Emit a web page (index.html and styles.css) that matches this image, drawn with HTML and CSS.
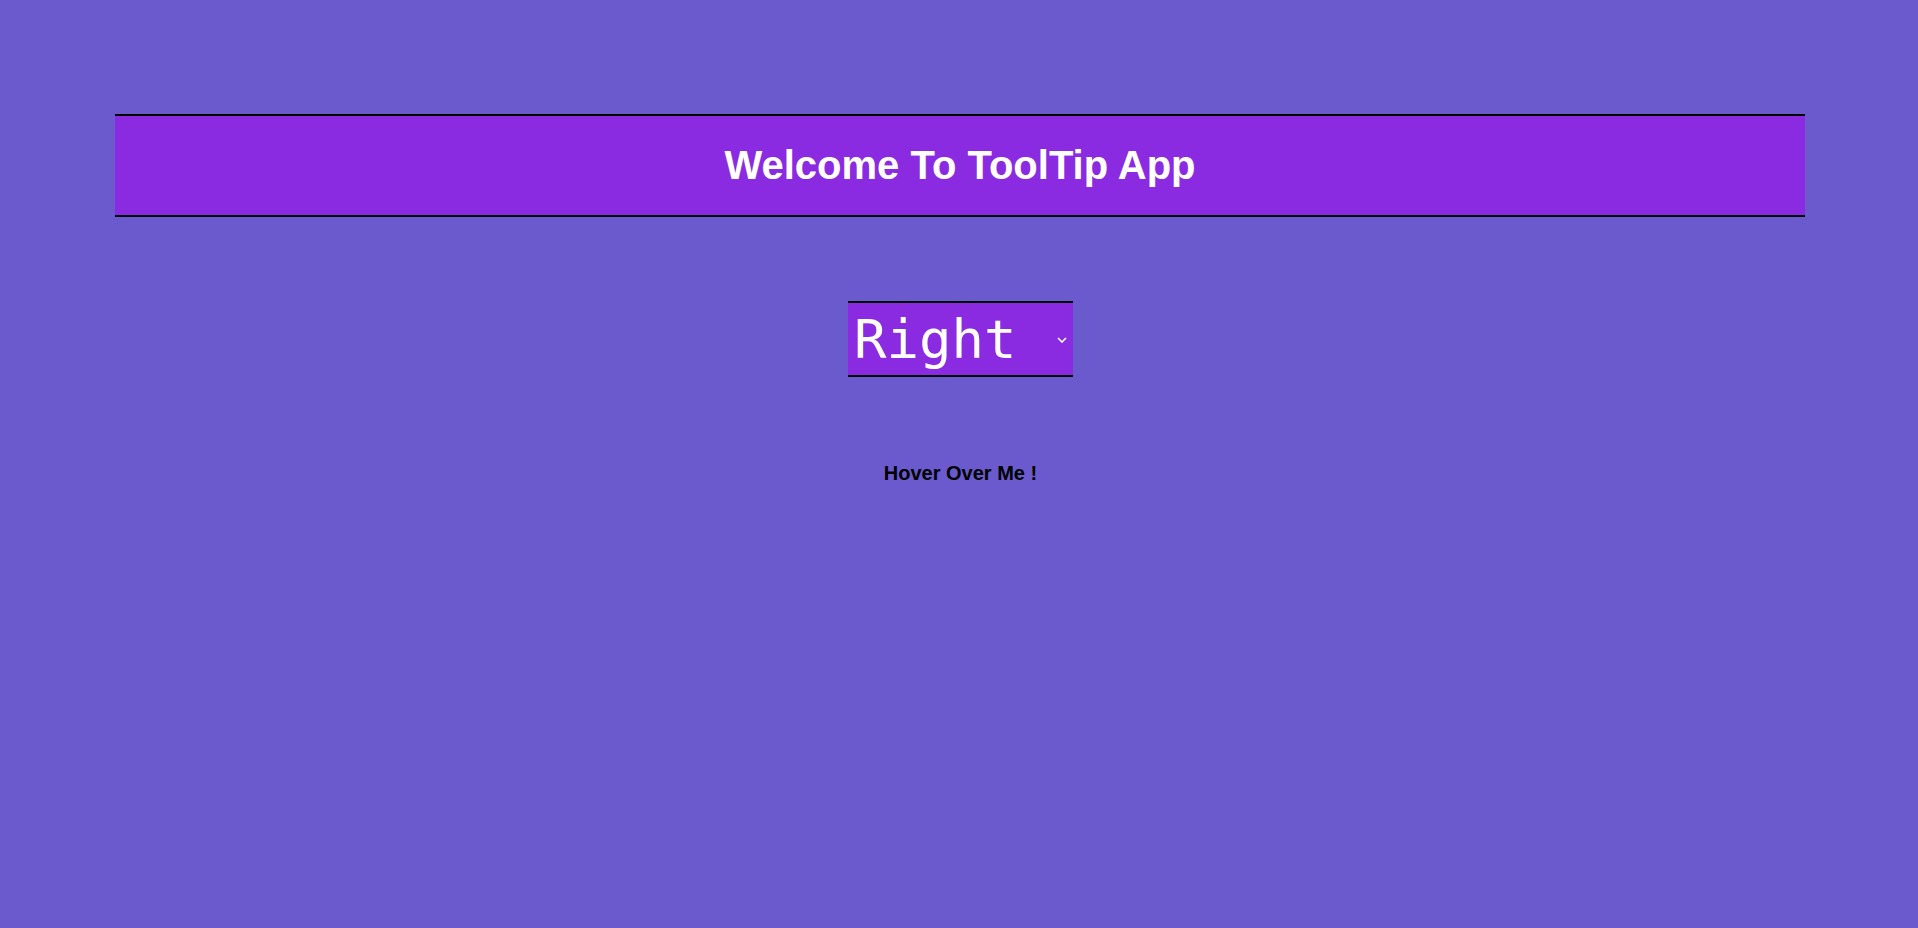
FILE: index.html
```html
<!DOCTYPE html>
<html lang="en">
<head>
<meta charset="utf-8">
<title>ToolTip App</title>
<link rel="stylesheet" href="styles.css">
</head>
<body>
  <header class="banner">
    <h1 class="banner-title">Welcome To ToolTip App</h1>
  </header>
  <main class="content">
    <div class="picker">
      <select class="picker-select">
        <option>Top</option>
        <option selected>Right</option>
        <option>Bottom</option>
        <option>Left</option>
      </select>
      <svg class="picker-arrow" width="10" height="6" viewBox="0 0 10 6" aria-hidden="true">
        <path d="M1 1 L5 5 L9 1" fill="none" stroke="#ffffff" stroke-width="1.6"/>
      </svg>
    </div>
    <p class="hover-target">Hover Over Me !</p>
  </main>
</body>
</html>
```
FILE: styles.css
```css
html, body {
  margin: 0;
  padding: 0;
}

body {
  background: #6a5acd;
  font-family: "Liberation Sans", Arial, sans-serif;
  min-height: 928px;
}

.banner {
  margin: 114px 113px 0 115px;
  height: 99px;
  background: #8a2be2;
  border-top: 2px solid #000;
  border-bottom: 2px solid #000;
  display: flex;
  align-items: center;
  justify-content: center;
}

.banner-title {
  margin: 0;
  color: #ffffff;
  font-size: 40px;
  font-weight: bold;
}

.content {
  display: flex;
  flex-direction: column;
  align-items: center;
  padding: 84px 0 0 3px;
}

.picker {
  position: relative;
  width: 225px;
}

.picker-select {
  appearance: none;
  -webkit-appearance: none;
  display: block;
  width: 225px;
  height: 76px;
  margin: 0;
  padding: 0 0 0 6px;
  background: #8a2be2;
  color: #ffffff;
  border: none;
  border-top: 2px solid #000;
  border-bottom: 2px solid #000;
  border-radius: 0;
  font-family: "DejaVu Sans Mono", monospace;
  font-size: 54px;
  outline: none;
}

.picker-arrow {
  position: absolute;
  right: 6px;
  top: 36px;
  pointer-events: none;
}

.hover-target {
  margin: 85px 0 0;
  font-size: 20px;
  font-weight: bold;
  color: #000;
}
```
